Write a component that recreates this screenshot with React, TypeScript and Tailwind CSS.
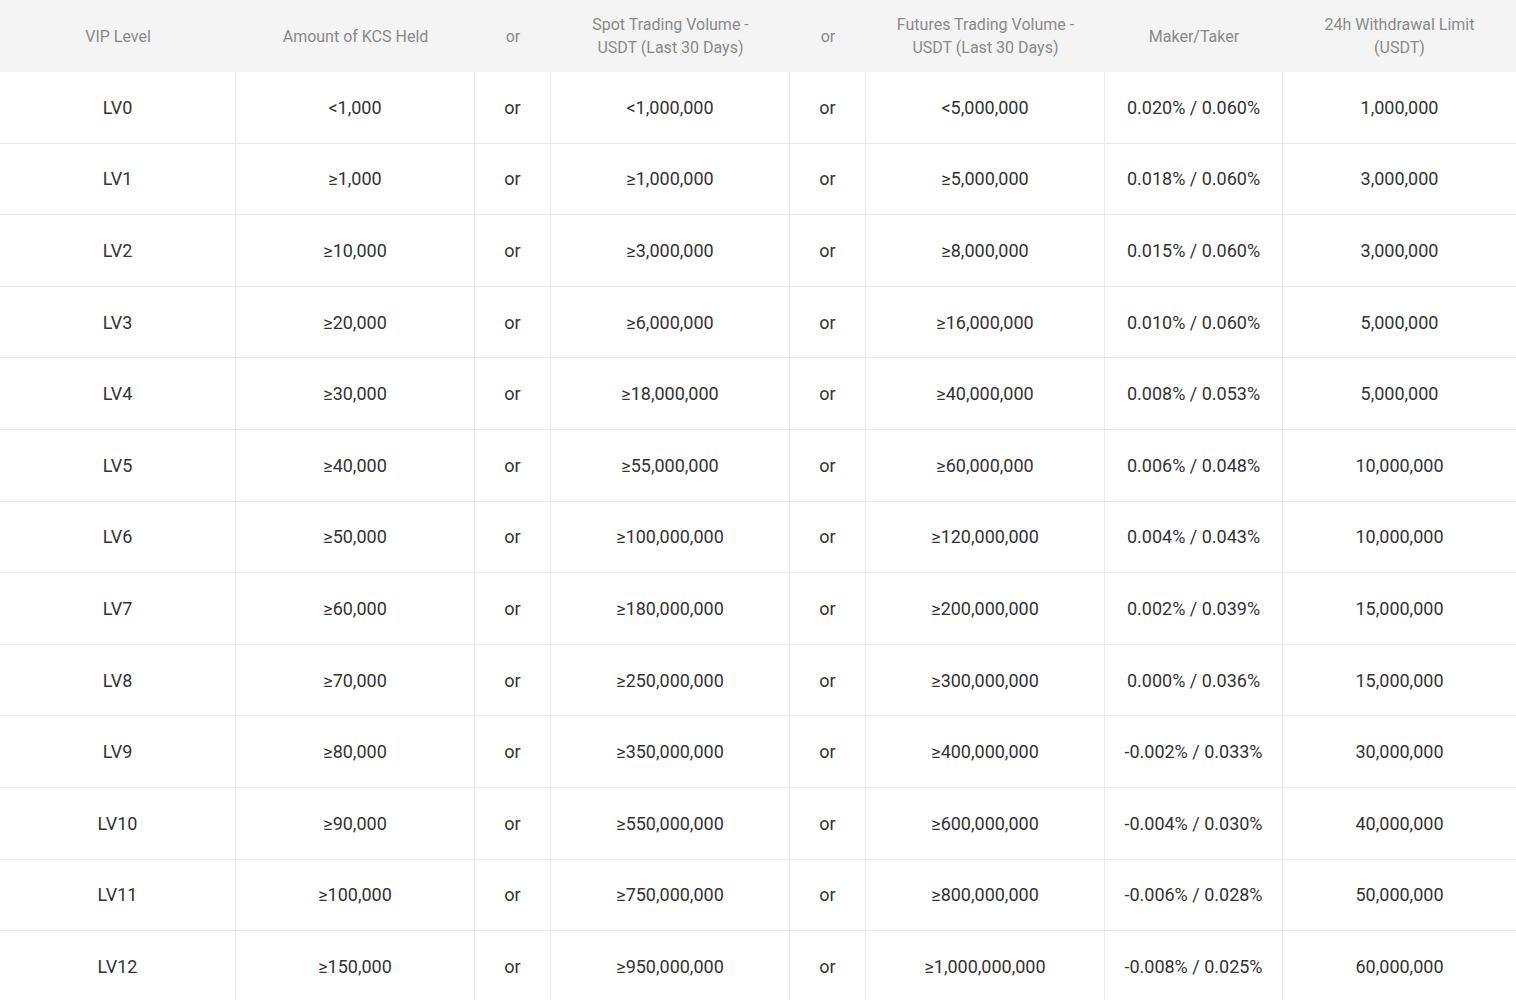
const rows = [
["LV0","<1,000","<1,000,000","<5,000,000","0.020% / 0.060%","1,000,000"],
["LV1","≥1,000","≥1,000,000","≥5,000,000","0.018% / 0.060%","3,000,000"],
["LV2","≥10,000","≥3,000,000","≥8,000,000","0.015% / 0.060%","3,000,000"],
["LV3","≥20,000","≥6,000,000","≥16,000,000","0.010% / 0.060%","5,000,000"],
["LV4","≥30,000","≥18,000,000","≥40,000,000","0.008% / 0.053%","5,000,000"],
["LV5","≥40,000","≥55,000,000","≥60,000,000","0.006% / 0.048%","10,000,000"],
["LV6","≥50,000","≥100,000,000","≥120,000,000","0.004% / 0.043%","10,000,000"],
["LV7","≥60,000","≥180,000,000","≥200,000,000","0.002% / 0.039%","15,000,000"],
["LV8","≥70,000","≥250,000,000","≥300,000,000","0.000% / 0.036%","15,000,000"],
["LV9","≥80,000","≥350,000,000","≥400,000,000","-0.002% / 0.033%","30,000,000"],
["LV10","≥90,000","≥550,000,000","≥600,000,000","-0.004% / 0.030%","40,000,000"],
["LV11","≥100,000","≥750,000,000","≥800,000,000","-0.006% / 0.028%","50,000,000"],
["LV12","≥150,000","≥950,000,000","≥1,000,000,000","-0.008% / 0.025%","60,000,000"],
];
const cols = "grid grid-cols-[236px_239px_76px_239px_76px_239px_178px_233px]";
export default function App() {
  const heads = ["VIP Level","Amount of KCS Held","or","Spot Trading Volume -\nUSDT (Last 30 Days)","or","Futures Trading Volume -\nUSDT (Last 30 Days)","Maker/Taker","24h Withdrawal Limit\n(USDT)"];
  return (
    <div className="w-[1516px] h-[1000px] overflow-hidden bg-white" style={{fontFamily:"Roboto, 'Liberation Sans', sans-serif"}}>
      <div className={`${cols} h-[72px] bg-[#f4f4f4] text-[#8a8a8a] text-[16px] leading-[23px]`}>
        {heads.map((h,i)=>(<div key={i} className="flex items-center justify-center text-center whitespace-pre-line">{h}</div>))}
      </div>
      {rows.map((r)=>{
        const cells=[r[0],r[1],"or",r[2],"or",r[3],r[4],r[5]];
        return (
          <div key={r[0]} className={`${cols} h-[71.6px] border-b border-[#e8e8e8] text-[#333] text-[18px]`}>
            {cells.map((c,i)=>(<div key={i} className={`flex items-center justify-center ${i<7?"border-r border-[#ececec]":""}`}>{c}</div>))}
          </div>
        );
      })}
    </div>
  );
}
